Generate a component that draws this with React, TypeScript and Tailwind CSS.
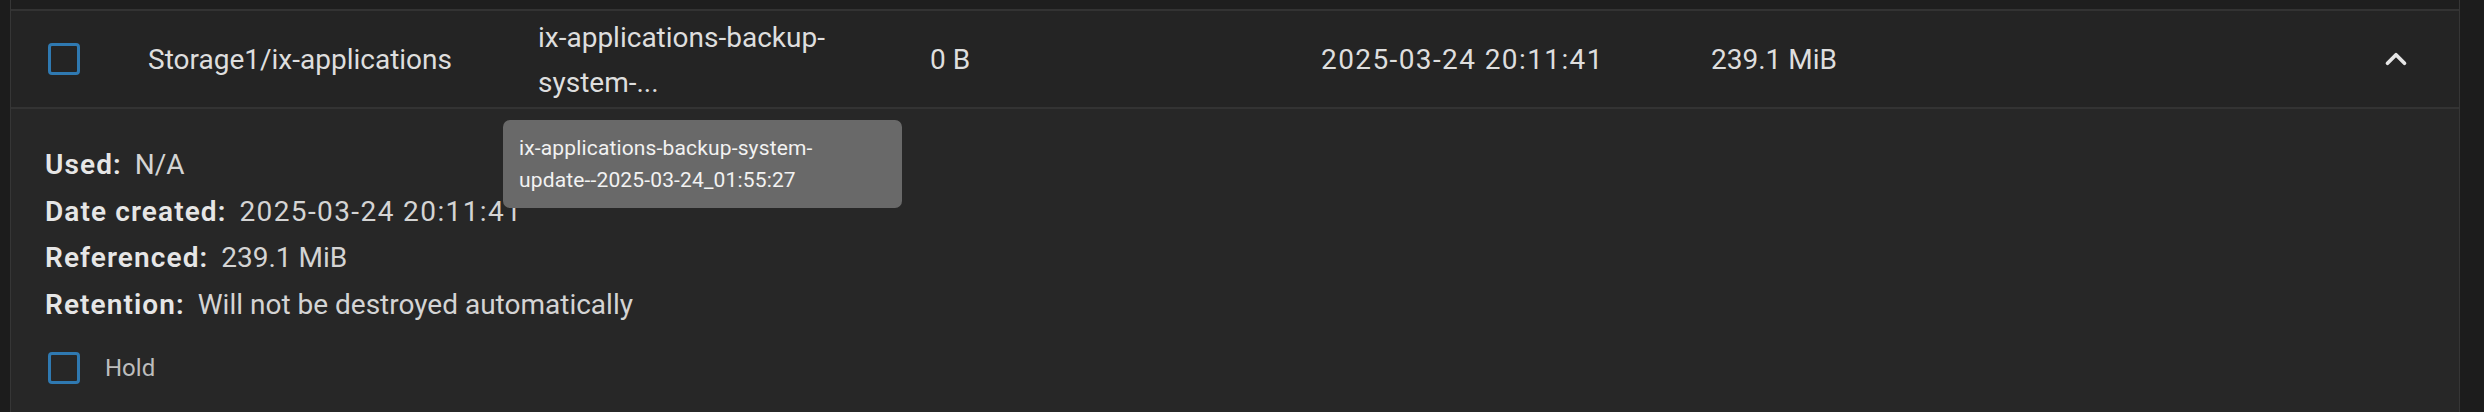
import { ChevronUp } from "lucide-react";

const FONT = "font-['Roboto','Liberation_Sans',sans-serif]";

function Checkbox() {
  return <div className="h-[32px] w-[32px] shrink-0 rounded-[4px] border-[3px] border-[#2f79b1]" />;
}

const details: [string, string, boolean][] = [
  ["Used:", "N/A", false],
  ["Date created:", "2025-03-24 20:11:41", true],
  ["Referenced:", "239.1 MiB", false],
  ["Retention:", "Will not be destroyed automatically", false],
];

export default function App() {
  return (
    <div className={`relative flex h-[412px] w-[2484px] overflow-hidden bg-[#1c1c1c] ${FONT}`}>
      <div className="w-[10px] shrink-0" />
      <div className="flex w-[2450px] shrink-0 flex-col border-x border-[#363636]">
        <div className="h-[11px] shrink-0 border-b-2 border-[#333333] bg-[#1e1e1e]" />

        {/* snapshot row */}
        <div className="flex h-[98px] shrink-0 items-center border-b-2 border-[#333333] bg-[#242424] text-[28px] text-[#dedede]">
          <div className="w-[137px] shrink-0 pl-[37px]">
            <Checkbox />
          </div>
          <div className="w-[390px] shrink-0 pt-[2px]">Storage1/ix-applications</div>
          <div className="w-[392px] shrink-0 pt-[2px] leading-[45px]">
            <div>ix-applications-backup-</div>
            <div>system-...</div>
          </div>
          <div className="w-[391px] shrink-0 pt-[2px]">0 B</div>
          <div className="w-[390px] shrink-0 pt-[2px] tracking-[1.4px]">2025-03-24 20:11:41</div>
          <div className="flex-1 pt-[2px]">239.1 MiB</div>
          <div className="mr-[43px] flex w-[40px] shrink-0 items-center justify-center">
            <ChevronUp size={34} strokeWidth={2.6} className="text-[#e6e6e6]" />
          </div>
        </div>

        {/* expanded details */}
        <div className="flex-1 bg-[#272727] pl-[34px] pt-[33px]">
          <div className="text-[28px] leading-[46.5px]">
            {details.map(([label, value, wide]) => (
              <div key={label} className="flex">
                <span className="mr-[13px] font-semibold tracking-[1.1px] text-[#e6e6e6]">{label}</span>
                <span className={wide ? "tracking-[1.4px] text-[#d4d4d4]" : "text-[#d4d4d4]"}>{value}</span>
              </div>
            ))}
          </div>
          <div className="mt-[22px] flex items-center gap-[25px] pl-[3px]">
            <Checkbox />
            <span className="text-[24px] text-[#bdbdbd]">Hold</span>
          </div>
        </div>
      </div>
      <div className="flex-1" />

      {/* tooltip */}
      <div className="absolute left-[503px] top-[120px] w-[399px] rounded-[7px] bg-[#696969] px-[16px] py-[12px] font-['Roboto',sans-serif] text-[21px] leading-[32px] tracking-[0.15px] text-[#f2f2f2]">
        ix-applications-backup-system-
        <br />
        update--2025-03-24_01:55:27
      </div>
    </div>
  );
}
